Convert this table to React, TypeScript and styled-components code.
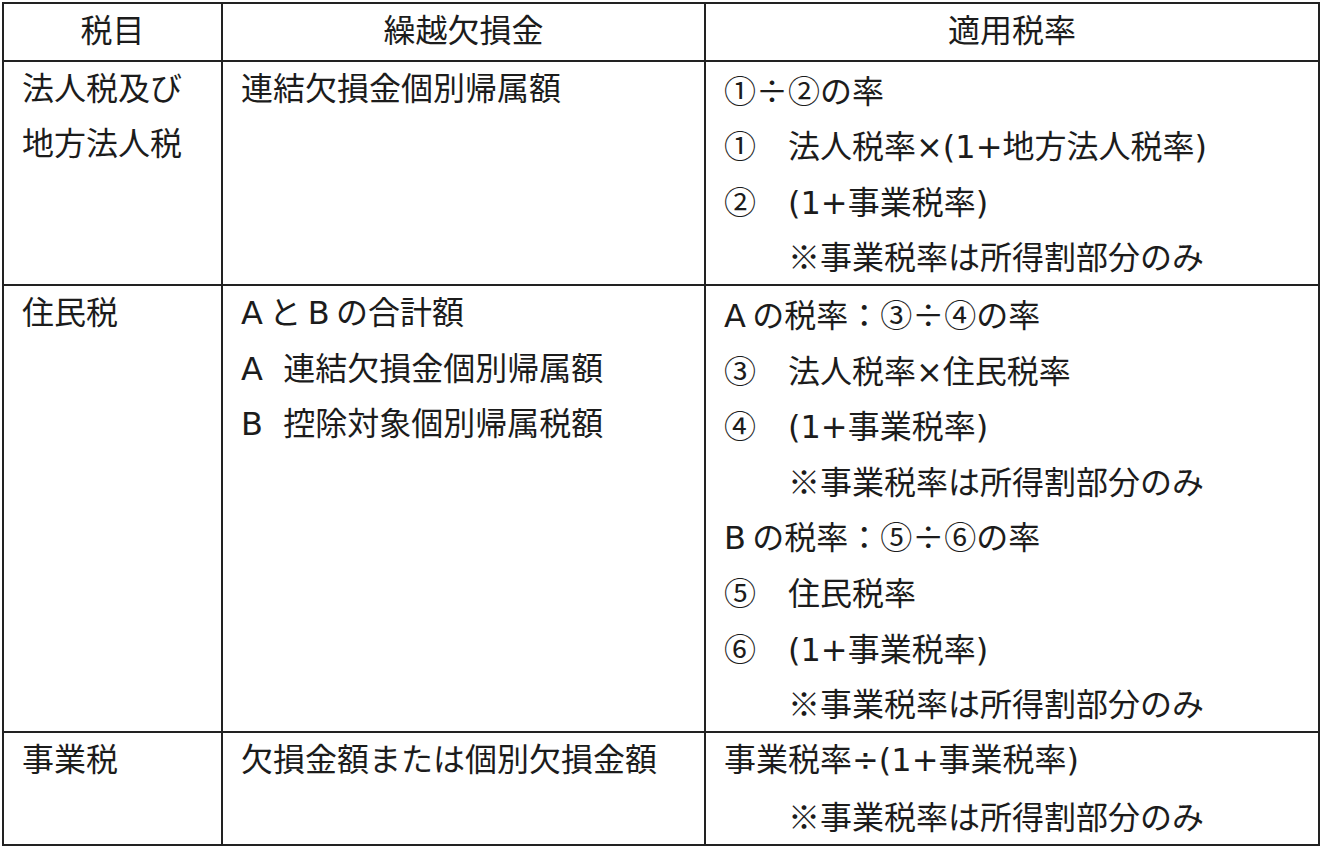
import React from "react";
import styled, { createGlobalStyle } from "styled-components";

const Global = createGlobalStyle`
  html, body { margin: 0; padding: 0; background: #ffffff; }
  body { font-family: "DejaVu Sans", "Noto Sans CJK JP", sans-serif; color: #1c1c1c; }
`;

const Page = styled.div`
  padding: 2px 2px 0 2px;
  width: 1316px;
`;

const Table = styled.table`
  border-collapse: collapse;
  width: 100%;
  table-layout: fixed;
  border: 2px solid #222;
  font-size: 32px;
  line-height: 55.6px;
`;

const Col = styled.col<{ $w: number }>`
  width: ${(p) => p.$w}px;
`;

const HeadCell = styled.th`
  border: 2px solid #222;
  font-weight: normal;
  text-align: center;
  padding: 0;
  height: 55.6px;
`;

const Cell = styled.td`
  border: 2px solid #222;
  vertical-align: top;
  padding: 0 0 0 18px;
`;

const Line = styled.div<{ $indent?: boolean }>`
  white-space: pre;
  height: 55.6px;
  padding-left: ${(p) => (p.$indent ? "64px" : "0")};
`;

const J = styled.span`
  font-family: "Noto Sans CJK JP", sans-serif;
`;

const Note = () => (
  <Line $indent>
    <J>※</J>事業税率は所得割部分のみ
  </Line>
);

const T = "\u2009";

export default function App() {
  return (
    <Page>
      <Global />
      <Table>
        <colgroup>
          <Col $w={219} />
          <Col $w={483} />
          <Col $w={614} />
        </colgroup>
        <thead>
          <tr>
            <HeadCell>税目</HeadCell>
            <HeadCell>繰越欠損金</HeadCell>
            <HeadCell>適用税率</HeadCell>
          </tr>
        </thead>
        <tbody>
          <tr>
            <Cell>
              <Line>法人税及び</Line>
              <Line>地方法人税</Line>
            </Cell>
            <Cell>
              <Line>連結欠損金個別帰属額</Line>
            </Cell>
            <Cell>
              <Line>
                <J>①÷②の率</J>
              </Line>
              <Line>
                <J>①　</J>法人税率×(1+地方法人税率)
              </Line>
              <Line>
                <J>②　</J>(1+事業税率)
              </Line>
              <Note />
            </Cell>
          </tr>
          <tr>
            <Cell>
              <Line>住民税</Line>
            </Cell>
            <Cell>
              <Line>{`A${T}と${T}B${T}の合計額`}</Line>
              <Line>A  連結欠損金個別帰属額</Line>
              <Line>B  控除対象個別帰属税額</Line>
            </Cell>
            <Cell>
              <Line>
                {`A${T}の税率：`}
                <J>③÷④の率</J>
              </Line>
              <Line>
                <J>③　</J>法人税率×住民税率
              </Line>
              <Line>
                <J>④　</J>(1+事業税率)
              </Line>
              <Note />
              <Line>
                {`B${T}の税率：`}
                <J>⑤÷⑥の率</J>
              </Line>
              <Line>
                <J>⑤　</J>住民税率
              </Line>
              <Line>
                <J>⑥　</J>(1+事業税率)
              </Line>
              <Note />
            </Cell>
          </tr>
          <tr>
            <Cell>
              <Line>事業税</Line>
            </Cell>
            <Cell>
              <Line>欠損金額または個別欠損金額</Line>
            </Cell>
            <Cell>
              <Line>事業税率÷(1+事業税率)</Line>
              <Note />
            </Cell>
          </tr>
        </tbody>
      </Table>
    </Page>
  );
}
